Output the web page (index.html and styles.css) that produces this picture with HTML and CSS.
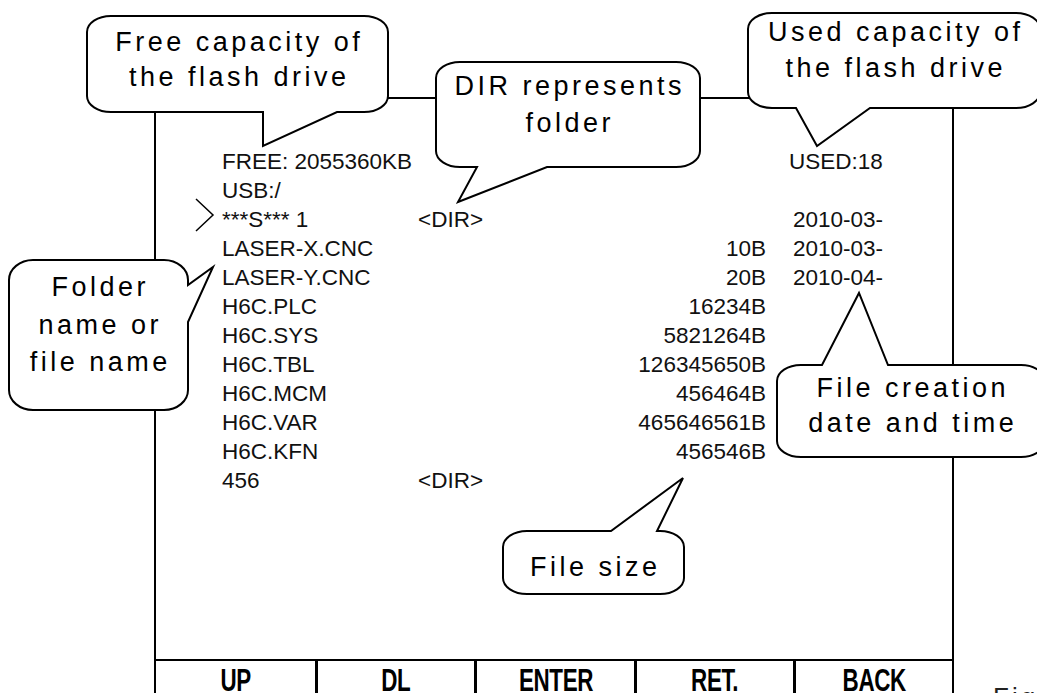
FILE: index.html
```html
<!DOCTYPE html>
<html lang="en">
<head>
  <meta charset="UTF-8" />
  <meta name="viewport" content="width=device-width, initial-scale=1.0">
  <title>USB file list</title>
  <link rel="stylesheet" href="styles.css">
</head>
<body>

  <!-- Controller screen -->
  <div class="screen">
    <div class="list">
      <div class="row">
        <span></span><span class="free">FREE: 2055360KB</span><span class="used">USED:18</span>
      </div>
      <div class="row"><span></span><span>USB:/</span></div>
      <div class="row">
        <span class="cursor"><svg width="20" height="34" viewBox="0 0 20 34"><polyline points="1,1 18,17 1,33" /></svg></span>
        <span>***S*** 1</span><span>&lt;DIR&gt;</span><span></span><span class="date">2010-03-</span>
      </div>
      <div class="row"><span></span><span>LASER-X.CNC</span><span></span><span class="size">10B</span><span class="date">2010-03-</span></div>
      <div class="row"><span></span><span>LASER-Y.CNC</span><span></span><span class="size">20B</span><span class="date">2010-04-</span></div>
      <div class="row"><span></span><span>H6C.PLC</span><span></span><span class="size">16234B</span></div>
      <div class="row"><span></span><span>H6C.SYS</span><span></span><span class="size">5821264B</span></div>
      <div class="row"><span></span><span>H6C.TBL</span><span></span><span class="size">126345650B</span></div>
      <div class="row"><span></span><span>H6C.MCM</span><span></span><span class="size">456464B</span></div>
      <div class="row"><span></span><span>H6C.VAR</span><span></span><span class="size">465646561B</span></div>
      <div class="row"><span></span><span>H6C.KFN</span><span></span><span class="size">456546B</span></div>
      <div class="row"><span></span><span>456</span><span>&lt;DIR&gt;</span></div>
    </div>

    <div class="keys">
      <div class="key"><span>UP</span></div>
      <div class="key"><span>DL</span></div>
      <div class="key"><span>ENTER</span></div>
      <div class="key"><span>RET.</span></div>
      <div class="key"><span>BACK</span></div>
    </div>
  </div>

  <div class="fig">Fig.</div>

  <!-- Callouts -->
  <div class="callout c-free">
    <svg class="bubble" width="301" height="96"><path d="M24,0 H277 A24,16 0 0 1 301,16 V80 A24,16 0 0 1 277,96 H250 L176,130 L176,96 H24 A24,16 0 0 1 0,80 V16 A24,16 0 0 1 24,0 Z" /></svg>
    <p>Free capacity of<br>the flash drive</p>
  </div>

  <div class="callout c-dir">
    <svg class="bubble" width="264" height="105"><path d="M24,0 H240 A24,16 0 0 1 264,16 V89 A24,16 0 0 1 240,105 H111 L22,140 L41,105 H24 A24,16 0 0 1 0,89 V16 A24,16 0 0 1 24,0 Z" /></svg>
    <p>DIR represents<br>folder</p>
  </div>

  <div class="callout c-used">
    <svg class="bubble" width="292" height="95"><path d="M24,0 H268 A24,16 0 0 1 292,16 V79 A24,16 0 0 1 268,95 H122 L69,133 L48,95 H24 A24,16 0 0 1 0,79 V16 A24,16 0 0 1 24,0 Z" /></svg>
    <p>Used capacity of<br>the flash drive</p>
  </div>

  <div class="callout c-name">
    <svg class="bubble" width="179" height="150"><path d="M24,0 H155 A24,20 0 0 1 179,20 V25 L204,7 L179,62 V130 A24,20 0 0 1 155,150 H24 A24,20 0 0 1 0,130 V20 A24,20 0 0 1 24,0 Z" /></svg>
    <p>Folder<br>name or<br>file name</p>
  </div>

  <div class="callout c-date">
    <svg class="bubble" width="268" height="92"><path d="M24,0 H45 L82,-72 L111,0 H244 A24,16 0 0 1 268,16 V76 A24,16 0 0 1 244,92 H24 A24,16 0 0 1 0,76 V16 A24,16 0 0 1 24,0 Z" /></svg>
    <p>File creation<br>date and time</p>
  </div>

  <div class="callout c-size">
    <svg class="bubble" width="181" height="63"><path d="M24,0 H108 L180,-53 L154,0 H157 A24,16 0 0 1 181,16 V47 A24,16 0 0 1 157,63 H24 A24,16 0 0 1 0,47 V16 A24,16 0 0 1 24,0 Z" /></svg>
    <p>File size</p>
  </div>

</body>
</html>
```

FILE: styles.css
```css
body { margin:0; width:1037px; height:693px; overflow:hidden; position:relative; background:#fff; display:flex; align-items:flex-start; font-family:"Liberation Sans", Arial, sans-serif; color:#000; }

/* screen frame */
.screen { flex-shrink:0; box-sizing:border-box; width:800px; height:620px; margin:97px 0 0 154px; border:2px solid #000; display:flex; flex-direction:column; }
.list { padding:48px 0 0 39px; color:#111; font-size:22.5px; line-height:29px; }
.row { display:grid; grid-template-columns:27px 196px 150px 198px 1fr; height:29px; white-space:nowrap; }
.free { grid-column:2 / 5; }
.used { padding-left:23px; }
.size { text-align:right; }
.date { padding-left:27px; }
.cursor svg { display:block; margin-top:-7px; overflow:visible; }
.cursor polyline { fill:none; stroke:#000; stroke-width:1.5; }

.keys { margin-top:auto; height:54px; border-top:2px solid #000; display:grid; grid-template-columns:repeat(5, 1fr); }
.key { padding-top:3px; text-align:center; border-left:3px solid #000; }
.key:first-child { border-left:none; }
.key span { display:inline-block; font-weight:bold; font-size:32px; line-height:32px; transform:scaleX(0.7); letter-spacing:-0.5px; }

.fig { flex-shrink:0; margin:682px 0 0 39px; font-size:26px; line-height:30px; color:#222; letter-spacing:3px; white-space:nowrap; }

/* callouts */
.callout { position:absolute; }
.bubble { position:absolute; left:0; top:0; overflow:visible; }
.bubble path { fill:#fff; stroke:#000; stroke-width:2; }
.callout p { position:relative; margin:0; text-align:center; font-size:27px; line-height:35px; letter-spacing:3.5px; padding-left:3.5px; white-space:nowrap; }

.c-free { left:87px; top:16px; width:301px; height:96px; }
.c-free p { padding-top:9px; }
.c-dir { left:436px; top:62px; width:264px; height:105px; }
.c-dir p { padding-top:6px; line-height:37px; }
.c-used { left:748px; top:13px; width:292px; height:95px; }
.c-used p { padding-top:1px; line-height:36px; }
.c-name { left:9px; top:260px; width:179px; height:150px; }
.c-name p { padding-top:9px; line-height:37.5px; }
.c-date { left:777px; top:365px; width:268px; height:92px; }
.c-date p { padding-top:6px; }
.c-size { left:503px; top:531px; width:181px; height:63px; }
.c-size p { padding-top:19px; }
```
